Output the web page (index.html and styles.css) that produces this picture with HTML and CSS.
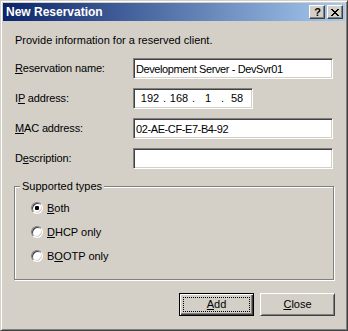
FILE: index.html
```html
<!DOCTYPE html>
<html>
<head>
<meta charset="utf-8">
<link rel="stylesheet" href="styles.css">
</head>
<body>
<div class="window">
  <div class="titlebar">
    <span class="title">New Reservation</span>
    <div class="caption-buttons">
      <div class="cap-btn help">?</div>
      <div class="cap-btn close">
        <svg width="8" height="7" viewBox="0 0 8 7" shape-rendering="crispEdges"><path d="M0 0h2v1H0z M6 0h2v1H6z M1 1h2v1H1z M5 1h2v1H5z M2 2h4v1H2z M3 3h2v1H3z M2 4h4v1H2z M1 5h2v1H1z M5 5h2v1H5z M0 6h2v1H0z M6 6h2v1H6z" fill="#000"/></svg>
      </div>
    </div>
  </div>
  <div class="content">
    <p class="intro">Provide information for a reserved client.</p>
    <div class="form">
      <div class="row">
        <label class="label"><u>R</u>eservation name:</label>
        <input class="field" type="text" value="Development Server - DevSvr01" readonly>
      </div>
      <div class="row">
        <label class="label">I<u>P</u> address:</label>
        <div class="field ip">
          <span class="seg">192</span><span class="dot">.</span><span class="seg">168</span><span class="dot">.</span><span class="seg">1</span><span class="dot">.</span><span class="seg">58</span>
        </div>
      </div>
      <div class="row">
        <label class="label"><u>M</u>AC address:</label>
        <input class="field" type="text" value="02-AE-CF-E7-B4-92" readonly>
      </div>
      <div class="row">
        <label class="label">D<u>e</u>scription:</label>
        <input class="field" type="text" value="" readonly>
      </div>
    </div>
    <fieldset class="group">
      <legend class="legend">Supported types</legend>
      <div class="radios">
        <div class="radio-row"><span class="radio checked"></span><span><u>B</u>oth</span></div>
        <div class="radio-row"><span class="radio"></span><span><u>D</u>HCP only</span></div>
        <div class="radio-row"><span class="radio"></span><span>B<u>O</u>OTP only</span></div>
      </div>
    </fieldset>
    <div class="buttons">
      <div class="btn default"><span><u>A</u>dd</span></div>
      <div class="btn"><span><u>C</u>lose</span></div>
    </div>
  </div>
</div>
</body>
</html>
```
FILE: styles.css
```css
html, body {
  margin: 0;
  padding: 0;
  background: #d4d0c8;
}
body {
  font-family: "Liberation Sans", Arial, sans-serif;
  font-size: 11px;
  line-height: 13px;
  color: #000;
}
.window {
  width: 348px;
  height: 331px;
  box-sizing: border-box;
  background: #d4d0c8;
  border: 1px solid;
  border-color: #d4d0c8 #404040 #404040 #d4d0c8;
  box-shadow: inset 1px 1px 0 #fff, inset -1px -1px 0 #808080;
  padding: 2px;
}
.titlebar {
  height: 18px;
  background: linear-gradient(to right, #0a246a, #a6caf0);
  display: flex;
  align-items: center;
  justify-content: space-between;
  padding: 0 2px 0 2px;
}
.title {
  color: #fff;
  font-weight: bold;
  font-family: "Liberation Sans", Arial, sans-serif;
  font-size: 12px;
  padding-left: 1px;
}
.caption-buttons {
  display: flex;
  gap: 2px;
}
.cap-btn {
  width: 16px;
  height: 14px;
  box-sizing: border-box;
  background: #d4d0c8;
  border: 1px solid;
  border-color: #fff #404040 #404040 #fff;
  box-shadow: inset -1px -1px 0 #808080;
  display: flex;
  align-items: center;
  justify-content: center;
}
.cap-btn.help {
  font-weight: bold;
  font-size: 11px;
  line-height: 11px;
  padding-left: 1px;
}
.cap-btn.close svg {
  display: block;
}
.content {
  padding: 0 0 0 11px;
}
.intro {
  margin: 13px 0 0 1px;
}
.form {
  margin-top: 11px;
  display: flex;
  flex-direction: column;
  gap: 9px;
}
.row {
  display: flex;
  align-items: center;
  height: 21px;
}
.label {
  width: 118px;
  padding-left: 1px;
  letter-spacing: -0.15px;
}
.field {
  box-sizing: border-box;
  height: 21px;
  width: 200px;
  margin: 0;
  padding: 0 2px;
  background: #fff;
  border: 1px solid;
  border-color: #808080 #fff #fff #808080;
  box-shadow: inset 1px 1px 0 #404040, inset -1px -1px 0 #d4d0c8;
  font-family: "Liberation Sans", Arial, sans-serif;
  font-size: 11px;
  letter-spacing: -0.4px;
  color: #000;
  outline: none;
}
.field.ip {
  width: 120px;
  display: flex;
  align-items: center;
  padding: 0 0 0 4px;
  letter-spacing: 0;
}
.seg {
  width: 24px;
  text-align: center;
}
.dot {
  width: 5px;
  text-align: center;
}
.group {
  margin: 11px 0 0 0;
  width: 320px;
  box-sizing: border-box;
  height: 100px;
  padding: 0;
  border: 1px solid #808080;
  box-shadow: 1px 1px 0 #fff, inset 1px 1px 0 #fff;
  min-inline-size: 0;
}
.legend {
  margin-left: 5px;
  padding: 0 2px;
  background: #d4d0c8;
  line-height: 13px;
}
.radios {
  padding: 3px 0 0 16px;
}
.radio-row {
  height: 24px;
  display: flex;
  align-items: center;
  gap: 4px;
}
.radio {
  width: 12px;
  height: 12px;
  box-sizing: border-box;
  border-radius: 50%;
  border: 1px solid;
  border-color: #808080 #fff #fff #808080;
  box-shadow: inset 1px 1px 0 #404040, inset -1px -1px 0 #d4d0c8;
  background: #fff;
  position: relative;
  flex: none;
}
.radio.checked::after {
  content: "";
  position: absolute;
  left: 3px;
  top: 3px;
  width: 4px;
  height: 4px;
  border-radius: 1px;
  background: #000;
}
.buttons {
  width: 321px;
  margin-top: 13px;
  display: flex;
  justify-content: flex-end;
  gap: 6px;
}
.btn {
  width: 75px;
  height: 23px;
  box-sizing: border-box;
  border: 1px solid;
  border-color: #fff #404040 #404040 #fff;
  box-shadow: inset 1px 1px 0 #d4d0c8, inset -1px -1px 0 #808080;
  display: flex;
  align-items: center;
  justify-content: center;
  position: relative;
}
.btn.default {
  border: 1px solid #000;
  box-shadow: inset 1px 1px 0 #fff, inset -1px -1px 0 #404040, inset -2px -2px 0 #808080;
}
.btn.default::after {
  content: "";
  position: absolute;
  left: 3px;
  top: 3px;
  right: 3px;
  bottom: 3px;
  border: 1px dotted #000;
}
```
